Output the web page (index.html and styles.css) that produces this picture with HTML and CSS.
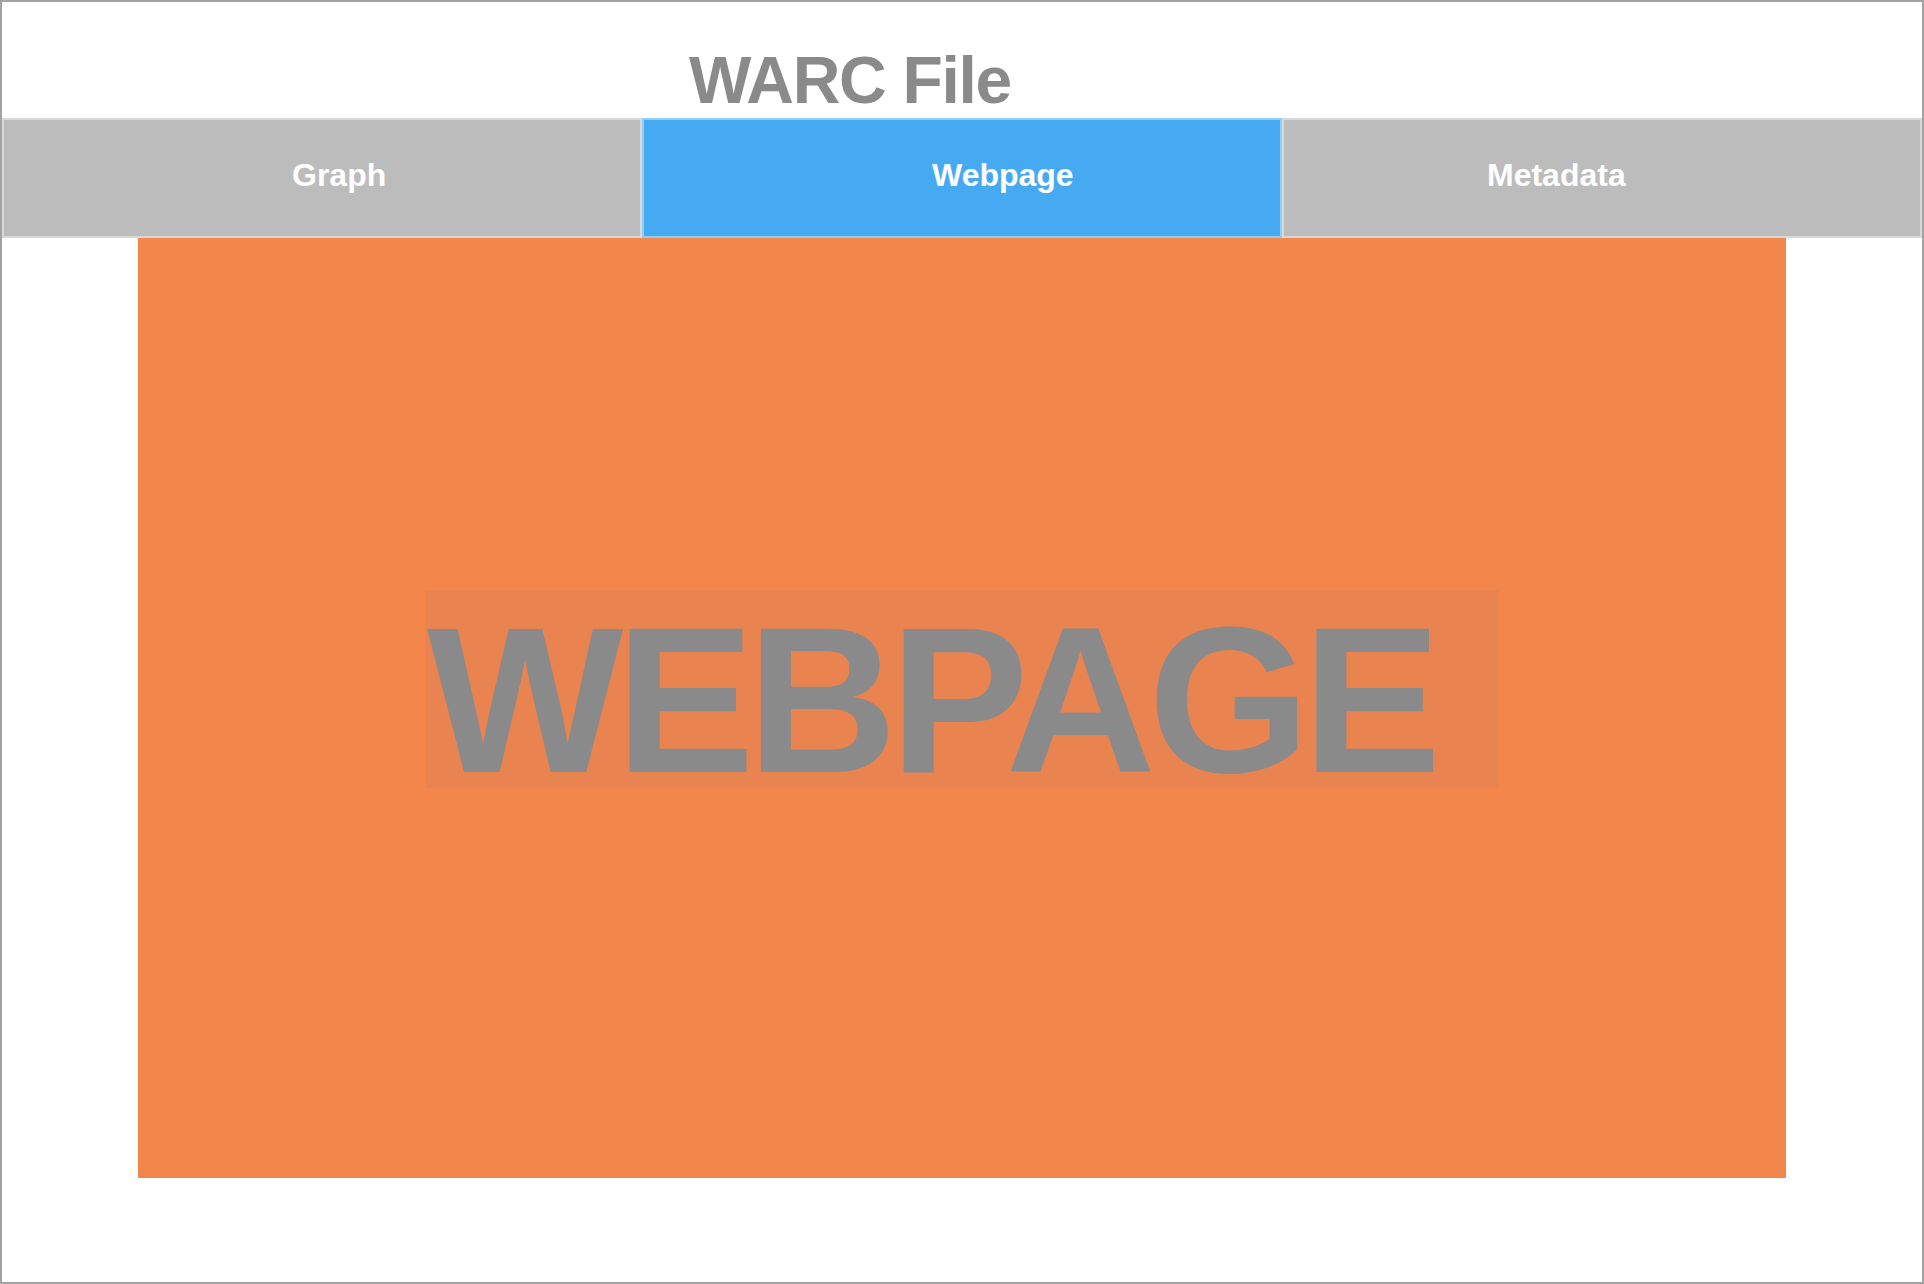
FILE: index.html
```html
<!DOCTYPE html>
<html lang="en">
<head>
<meta charset="utf-8">
<title>WARC File</title>
<link rel="stylesheet" href="styles.css">
</head>
<body>
<div class="frame">
  <header class="header">
    <h1 class="title">WARC File</h1>
  </header>
  <nav class="tabs">
    <div class="tab tab-graph">Graph</div>
    <div class="tab tab-webpage tab-active">Webpage</div>
    <div class="tab tab-metadata">Metadata</div>
  </nav>
  <main class="content">
    <div class="viewer">
      <div class="label-box">WEBPAGE</div>
    </div>
  </main>
</div>
</body>
</html>
```

FILE: styles.css
```css
html, body {
  margin: 0;
  padding: 0;
  background: #ffffff;
}

body {
  font-family: "Liberation Sans", Arial, sans-serif;
}

.frame {
  box-sizing: border-box;
  width: 1924px;
  height: 1284px;
  border: 2px solid #a2a2a2;
  display: flex;
  flex-direction: column;
  background: #ffffff;
  overflow: hidden;
}

.header {
  box-sizing: border-box;
  height: 116px;
  padding-top: 42px;
  padding-left: 687px;
}

.title {
  margin: 0;
  font-size: 66px;
  line-height: 73px;
  font-weight: 700;
  letter-spacing: -1.3px;
  color: #8a8a8a;
}

.tabs {
  display: flex;
  height: 120px;
}

.tab {
  box-sizing: border-box;
  width: 640px;
  height: 120px;
  padding-top: 39px;
  font-size: 32px;
  line-height: 37px;
  font-weight: 700;
  color: #ffffff;
  background: #bcbcbc;
  box-shadow: inset 0 0 0 2px rgba(255, 255, 255, 0.42);
}

.tab-active {
  background: #46aaf2;
}

.tab-graph {
  padding-left: 290px;
}

.tab-webpage {
  padding-left: 290px;
}

.tab-metadata {
  padding-left: 205px;
}

.content {
  padding-left: 136px;
}

.viewer {
  box-sizing: border-box;
  width: 1648px;
  height: 940px;
  background: #f3864a;
  padding-top: 352px;
  display: flex;
  justify-content: center;
  align-items: flex-start;
}

.label-box {
  box-sizing: border-box;
  width: 1074px;
  height: 198px;
  padding-left: 2px;
  background: #e9834f;
  color: #8a8a8a;
  font-size: 208px;
  line-height: 220px;
  font-weight: 700;
  letter-spacing: -7.5px;
  white-space: nowrap;
}
```
